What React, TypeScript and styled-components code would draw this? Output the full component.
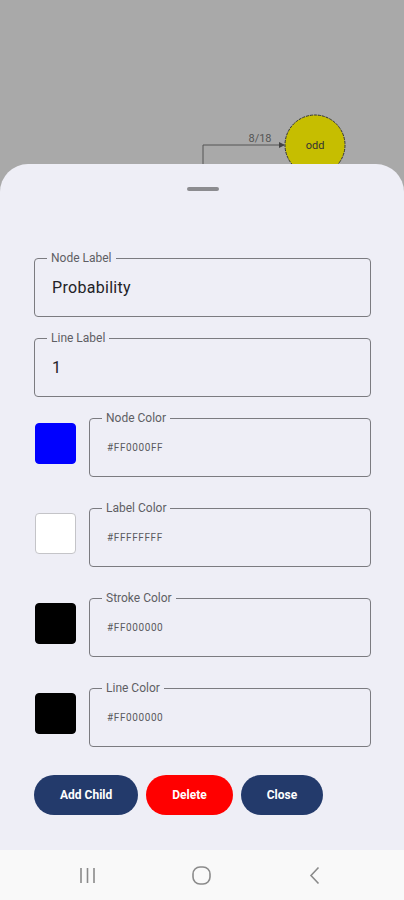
import React from 'react';
import styled, { createGlobalStyle } from 'styled-components';

const GlobalStyle = createGlobalStyle`
  html, body {
    margin: 0;
    padding: 0;
    background: #a9a9a9;
    font-family: Roboto, "Noto Sans", Arial, sans-serif;
  }
  * {
    box-sizing: border-box;
  }
`;

const SHEET_BG = '#eeeef6';

const Screen = styled.div`
  width: 404px;
  height: 900px;
  display: flex;
  flex-direction: column;
  background: #a9a9a9;
  overflow: hidden;
`;

const Canvas = styled.div`
  position: relative;
  height: 164px;
  flex-shrink: 0;
  overflow: hidden;
`;

const Sheet = styled.div`
  flex: 1;
  display: flex;
  flex-direction: column;
  padding: 0 33px 0 34px;
  background: ${SHEET_BG};
  border-radius: 28px 28px 0 0;
`;

const Handle = styled.div`
  align-self: center;
  width: 32px;
  height: 4px;
  margin: 23px 0 59px 1px;
  border-radius: 2px;
  background: #8c8c90;
`;

const FieldWrap = styled.div<{ $gap?: number }>`
  padding-top: 8px;
  margin-bottom: ${({ $gap }) => $gap ?? 13}px;
`;

const ColorField = styled(FieldWrap)`
  flex: 1;
`;

const FieldBox = styled.div`
  position: relative;
  height: 59px;
  display: flex;
  align-items: center;
  padding-left: 17px;
  border: 1px solid #7b7b80;
  border-radius: 4px;
`;

const FloatLabel = styled.span`
  position: absolute;
  top: -8px;
  left: 12px;
  padding: 0 4px;
  background: ${SHEET_BG};
  font-size: 12px;
  line-height: 14px;
  color: #5e5e64;
`;

const Value = styled.span<{ $small?: boolean }>`
  font-size: ${({ $small }) => ($small ? '10px' : '16px')};
  letter-spacing: ${({ $small }) => ($small ? '0.6px' : '0.3px')};
  color: ${({ $small }) => ($small ? '#5a5a60' : '#222226')};
`;

const ColorRow = styled.div`
  display: flex;
  align-items: center;
  gap: 13px;
  margin-bottom: 23px;
`;

const Swatch = styled.div<{ $color: string }>`
  width: 41px;
  height: 41px;
  margin-left: 1px;
  flex-shrink: 0;
  border-radius: 4px;
  background: ${({ $color }) => $color};
  border: 1px solid ${({ $color }) => ($color === '#ffffff' ? '#c4c4c8' : $color)};
`;

const ButtonRow = styled.div`
  display: flex;
  gap: 8px;
  margin-top: 5px;
`;

const ActionButton = styled.button<{ $danger?: boolean }>`
  height: 40px;
  padding: 0 26px;
  border: none;
  border-radius: 20px;
  background: ${({ $danger }) => ($danger ? '#ff0000' : '#233a6b')};
  color: #ffffff;
  font-family: Roboto, Arial, sans-serif;
  font-size: 12px;
  font-weight: 700;
  cursor: pointer;
`;

const NavBar = styled.div`
  height: 50px;
  flex-shrink: 0;
  display: flex;
  align-items: center;
  gap: 73px;
  padding-left: 68px;
  background: #f9f9f9;
`;

const NavSlot = styled.div`
  width: 40px;
  height: 24px;
  display: flex;
  align-items: center;
  justify-content: center;
`;

const colorRows = [
  { label: 'Node Color', value: '#FF0000FF', color: '#0000ff' },
  { label: 'Label Color', value: '#FFFFFFFF', color: '#ffffff' },
  { label: 'Stroke Color', value: '#FF000000', color: '#000000' },
  { label: 'Line Color', value: '#FF000000', color: '#000000' },
];

const TreeCanvas: React.FC = () => (
  <svg width="404" height="164" style={{ position: 'absolute', left: 0, top: 0 }}>
    <defs>
      <marker id="arrow" markerWidth="6" markerHeight="6" refX="5" refY="3" orient="auto">
        <path d="M0,0 L6,3 L0,6 Z" fill="#444" />
      </marker>
    </defs>
    <polyline
      points="203,170 203,145 284,145"
      fill="none"
      stroke="#555"
      strokeWidth="1"
      markerEnd="url(#arrow)"
    />
    <text x="260" y="142" fontSize="11" fill="#555" textAnchor="middle" fontFamily="Roboto, Arial, sans-serif">
      8/18
    </text>
    <circle cx="315" cy="145" r="30" fill="#c6be00" stroke="#333" strokeWidth="1" strokeDasharray="3 1" />
    <text x="315" y="149" fontSize="11" fill="#333" textAnchor="middle" fontFamily="Roboto, Arial, sans-serif">
      odd
    </text>
  </svg>
);

const App: React.FC = () => {
  return (
    <>
      <GlobalStyle />
      <Screen>
        <Canvas>
          <TreeCanvas />
        </Canvas>

        <Sheet>
          <Handle />

          <FieldWrap>
            <FieldBox>
              <FloatLabel>Node Label</FloatLabel>
              <Value>Probability</Value>
            </FieldBox>
          </FieldWrap>

          <FieldWrap>
            <FieldBox>
              <FloatLabel>Line Label</FloatLabel>
              <Value>1</Value>
            </FieldBox>
          </FieldWrap>

          {colorRows.map((row) => (
            <ColorRow key={row.label}>
              <Swatch $color={row.color} />
              <ColorField $gap={0}>
                <FieldBox>
                  <FloatLabel>{row.label}</FloatLabel>
                  <Value $small>{row.value}</Value>
                </FieldBox>
              </ColorField>
            </ColorRow>
          ))}

          <ButtonRow>
            <ActionButton>Add Child</ActionButton>
            <ActionButton $danger>Delete</ActionButton>
            <ActionButton>Close</ActionButton>
          </ButtonRow>
        </Sheet>

        <NavBar>
          <NavSlot>
            <svg width="18" height="17" viewBox="0 0 18 17">
              <g stroke="#8a8a8a" strokeWidth="1.6">
                <line x1="2" y1="1" x2="2" y2="16" />
                <line x1="8.5" y1="1" x2="8.5" y2="16" />
                <line x1="15" y1="1" x2="15" y2="16" />
              </g>
            </svg>
          </NavSlot>
          <NavSlot>
            <svg width="19" height="19" viewBox="0 0 19 19">
              <rect x="1" y="1" width="17" height="17" rx="7" fill="none" stroke="#8a8a8a" strokeWidth="1.6" />
            </svg>
          </NavSlot>
          <NavSlot>
            <svg width="11" height="19" viewBox="0 0 11 19">
              <polyline points="9.5,1.5 2,9.5 9.5,17.5" fill="none" stroke="#8a8a8a" strokeWidth="1.6" />
            </svg>
          </NavSlot>
        </NavBar>
      </Screen>
    </>
  );
};

export default App;
